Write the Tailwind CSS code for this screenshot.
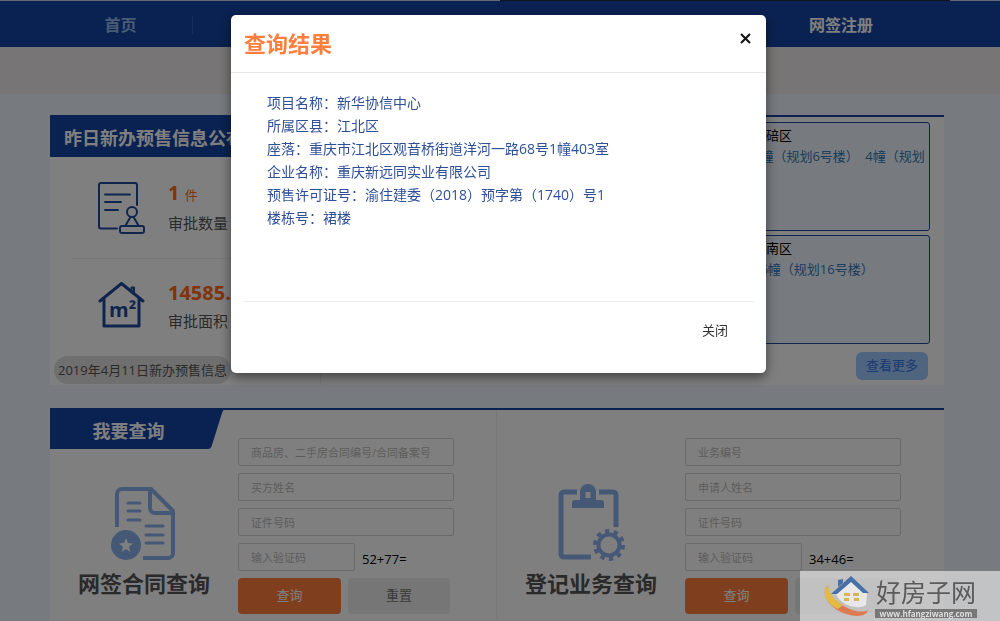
<!DOCTYPE html>
<html lang="zh-CN">
<head>
    <meta charset="UTF-8">
    <meta name="viewport" content="width=device-width, initial-scale=1.0">
    <title>查询结果</title>
    <script src="https://cdn.jsdelivr.net/npm/@tailwindcss/browser@4"></script>
</head>
<body class="h-screen overflow-hidden bg-[#eff6ff] font-['Open_Sans','Noto_Sans_CJK_SC',sans-serif] text-[13px] text-black">

  <!-- == NavBar Start == -->
  <header>
    <div class="flex h-px bg-[#c3d3e8]"><div class="ml-[50%] w-[45%] bg-[#1c2a3c]"></div></div>
    <nav class="h-[46px] bg-[#1545a4] pl-[49px] pr-[87px] pt-px">
      <ul class="grid h-full grid-cols-6 items-center text-center text-base font-bold">
        <li class="border-r border-[#2d5ab0] leading-[18px]"><a href="#" class="text-[#8fb8e8]">首页</a></li>
        <li class="col-start-6 leading-[18px]"><a href="#" class="text-white">网签注册</a></li>
      </ul>
    </nav>
    <div class="h-[47px] bg-[#eeebea]"></div>
  </header>
  <!-- == NavBar End  == -->

  <main class="space-y-[23px] pl-[50px] pr-[56px] pt-[21px]">

    <!-- Pre-sale announcements -->
    <section class="h-[270px] border-t-2 border-[#1545a4] bg-white">
      <div class="flex h-full">
        <div class="w-[271px] shrink-0 border-r border-[#f0f0f0]">
          <h2 class="h-10 whitespace-nowrap bg-[#1545a4] pl-[14px] text-lg leading-[42px] font-bold text-white">昨日新办预售信息公布</h2>
          <div class="mx-[22px] flex h-[102px] items-center border-b border-[#f0f0f0] pl-[26px]">
            <svg class="h-[52px] w-12 shrink-0" viewBox="0 0 48 52" fill="none" stroke="#1f4a9c" stroke-width="2" stroke-linecap="round" stroke-linejoin="round">
              <path d="M19 46.500H3a2 2 0 0 1-2-2V3a2 2 0 0 1 2-2h34a2 2 0 0 1 2 2v20M7 12.500h25M7 20h16M7 28h13"/>
              <circle cx="34" cy="30" r="5"/>
              <path d="M32.500 35L27.500 43.500M35.500 35L40.500 43.500"/>
              <rect x="22" y="44" width="24" height="7" rx="2"/>
            </svg>
            <div class="ml-[22px] whitespace-nowrap">
              <p class="text-xl leading-7 font-bold text-[#ff6812]">1 <span class="text-[13px] font-normal">件</span></p>
              <p class="text-[15px] leading-7 text-[#555]">审批数量</p>
            </div>
          </div>
          <div class="mx-[22px] flex h-24 items-center pl-[26px]">
            <svg class="mb-1 h-12 w-12 shrink-0" viewBox="0 0 48 48" fill="none" stroke="#1f4a9c" stroke-width="3" stroke-linecap="round" stroke-linejoin="round">
              <path d="M2 20L23.500 2.500L45 20M6 18v27h35V18"/>
              <path d="M33.500 9V6.500h2.500V12" stroke-width="2"/>
              <text x="11" y="36" font-size="20" font-weight="bold" fill="#1f4a9c" stroke="none">m²</text>
            </svg>
            <div class="ml-[22px] whitespace-nowrap">
              <p class="text-xl leading-7 font-bold text-[#ff6812]">14585.7</p>
              <p class="text-[15px] leading-7 text-[#555]">审批面积</p>
            </div>
          </div>
          <p class="ml-1 mt-px inline-block rounded-full bg-[#dedede] px-1 leading-7 text-[#555]">2019年4月11日新办预售信息</p>
        </div>

        <div class="flex flex-1 flex-col items-end pr-[14px] pt-[5px]">
          <ul class="w-[185px] space-y-1">
            <li class="h-[109px] overflow-hidden rounded-[3px] border border-[#1f4a9c] bg-[#eff6ff] px-[7px] pt-[3px] whitespace-nowrap">
              <p class="leading-[19px]">北碚区</p>
              <p class="leading-[23px] text-[#337ab7]">3幢（规划6号楼）　4幢（规划</p>
            </li>
            <li class="h-[109px] overflow-hidden rounded-[3px] border border-[#1f4a9c] bg-[#eff6ff] px-[7px] pt-[3px] whitespace-nowrap">
              <p class="leading-[19px]">巴南区</p>
              <p class="leading-[23px] text-[#337ab7]">16幢（规划16号楼）</p>
            </li>
          </ul>
          <button type="button" class="mt-2 mr-[2px] h-7 rounded-md bg-[#9ec8ff] px-[10px] text-[#3576e0]">查看更多</button>
        </div>
      </div>
    </section>

    <!-- Query forms -->
    <section class="relative h-[230px] border-t-2 border-[#1545a4] bg-white">
      <svg class="absolute -top-[2px] left-0 h-[41px] w-[175px]" viewBox="0 0 175 41" fill="#1545a4"><path d="M0 0H175Q173 2 172 5L162 37Q161 41 158 41H0z"/></svg>
      <h2 class="absolute left-0 top-0 w-[157px] text-center text-lg leading-[42px] font-bold text-white">我要查询</h2>

      <div class="grid h-full grid-cols-2">
        <form class="flex border-r border-[#f0f0f0] pt-7">
          <div class="flex w-[188px] shrink-0 flex-col items-center pt-12">
            <svg class="h-[75px] w-[68px]" viewBox="0 0 68 75" fill="none" stroke="#8ab0ea" stroke-width="4" stroke-linejoin="round">
              <path d="M7 41V8a5 5 0 0 1 5-5h29l22 22v42a5 5 0 0 1-5 5H33"/>
              <path d="M40 4v18a5 5 0 0 0 5 5h18"/>
              <path d="M18 17h12M18 25h12M18 34h12M36 40h17M36 49h17M36 57h17" stroke-width="3" stroke-linecap="round"/>
              <circle cx="16" cy="59" r="15" fill="#8ab0ea" stroke="none"/>
              <path d="M16 52l2 5 5 .4-4 3.400 1.400 5.200-4.400-3-4.400 3 1.400-5.200-4-3.400 5-.4z" fill="#fff" stroke="none"/>
            </svg>
            <h3 class="mt-[7px] text-[22px] leading-[30px] font-bold text-[#555]">网签合同查询</h3>
          </div>
          <div class="w-[216px] space-y-[7px]">
            <input type="text" aria-label="合同编号" placeholder="商品房、二手房合同编号/合同备案号" class="block h-7 w-full rounded-[2px] border border-[#d4d4d4] px-3 text-[11px] placeholder:text-[#bbb]">
            <input type="text" aria-label="买方姓名" placeholder="买方姓名" class="block h-7 w-full rounded-[2px] border border-[#d4d4d4] px-3 text-[11px] placeholder:text-[#bbb]">
            <input type="text" aria-label="证件号码" placeholder="证件号码" class="block h-7 w-full rounded-[2px] border border-[#d4d4d4] px-3 text-[11px] placeholder:text-[#bbb]">
            <div class="flex items-center gap-[7px]">
              <input type="text" aria-label="输入验证码" placeholder="输入验证码" class="h-7 w-[117px] rounded-[2px] border border-[#d4d4d4] px-3 text-[11px] placeholder:text-[#bbb]">
              <span class="pt-1 leading-6">52+77=</span>
            </div>
            <div class="flex gap-[7px]">
              <button type="submit" class="h-9 w-[103px] rounded bg-[#ff7f3f] text-white">查询</button>
              <button type="reset" class="h-9 w-[102px] rounded bg-[#ececec] text-[#777]">重置</button>
            </div>
          </div>
        </form>

        <form class="flex pt-7">
          <div class="flex w-[188px] shrink-0 flex-col items-center pt-[46px]">
            <svg class="h-[77px] w-[68px]" viewBox="0 0 68 77" fill="none" stroke="#8ab0ea" stroke-width="5">
              <path d="M20 8H7a3 3 0 0 0-3 3v59a3 3 0 0 0 3 3h27M42 8h14a3 3 0 0 1 3 3v32"/>
              <path d="M23 8a8 8 0 0 1 16 0v8h5a3 3 0 0 1 3 3v5H15v-5a3 3 0 0 1 3-3h5zM28.500 8v6h5V8z" fill="#8ab0ea" fill-rule="evenodd" stroke="none"/>
              <circle cx="52" cy="61" r="10.500" stroke-width="4"/>
              <circle cx="52" cy="61" r="14" stroke-width="4" stroke-dasharray="4.400 4.396"/>
            </svg>
            <h3 class="mt-[7px] text-[22px] leading-[30px] font-bold text-[#555]">登记业务查询</h3>
          </div>
          <div class="w-[216px] space-y-[7px]">
            <input type="text" aria-label="业务编号" placeholder="业务编号" class="block h-7 w-full rounded-[2px] border border-[#d4d4d4] px-3 text-[11px] placeholder:text-[#bbb]">
            <input type="text" aria-label="申请人姓名" placeholder="申请人姓名" class="block h-7 w-full rounded-[2px] border border-[#d4d4d4] px-3 text-[11px] placeholder:text-[#bbb]">
            <input type="text" aria-label="证件号码" placeholder="证件号码" class="block h-7 w-full rounded-[2px] border border-[#d4d4d4] px-3 text-[11px] placeholder:text-[#bbb]">
            <div class="flex items-center gap-[7px]">
              <input type="text" aria-label="输入验证码" placeholder="输入验证码" class="h-7 w-[117px] rounded-[2px] border border-[#d4d4d4] px-3 text-[11px] placeholder:text-[#bbb]">
              <span class="pt-1 leading-6">34+46=</span>
            </div>
            <div class="flex gap-[7px]">
              <button type="submit" class="h-9 w-[103px] rounded bg-[#ff7f3f] text-white">查询</button>
              <button type="reset" aria-label="重置" class="h-9 w-[102px] rounded bg-[#ececec]"></button>
            </div>
          </div>
        </form>
      </div>
    </section>
  </main>

  <!-- Result dialog -->
  <div class="fixed inset-0 flex items-start justify-center bg-black/50 pt-[15px] pr-[3px]">
    <div role="dialog" aria-labelledby="resultTitle" class="w-[535px] rounded-[5px] bg-white shadow-[0_4px_12px_rgba(0,0,0,0.5)]">
      <div class="flex h-[58px] items-start justify-between border-b border-[#e9e9e9] pl-[13px] pr-[15px]">
        <h1 id="resultTitle" class="text-[22px] leading-[57px] font-bold text-[#ff7f3f]">查询结果</h1>
        <button type="button" aria-label="关闭" class="mt-[18px]">
          <svg class="h-[11px] w-[11px]" viewBox="0 0 11 11" stroke="#111" stroke-width="2"><path d="M1 1l9 9M10 1l-9 9"/></svg>
        </button>
      </div>
      <div class="h-[228px] px-9 pt-[18px] text-sm leading-[23px] text-[#2f4f98]">
        <p>项目名称：新华协信中心</p>
        <p>所属区县：江北区</p>
        <p>座落：重庆市江北区观音桥街道洋河一路68号1幢403室</p>
        <p>企业名称：重庆新远同实业有限公司</p>
        <p>预售许可证号：渝住建委（2018）预字第（1740）号1</p>
        <p>楼栋号：裙楼</p>
      </div>
      <div class="mx-3 flex h-[72px] justify-end border-t border-[#eee] pr-[26px]">
        <button type="button" class="h-[58px] text-[13px] text-[#333]">关闭</button>
      </div>
    </div>
  </div>

  <!-- Site badge -->
  <div class="fixed bottom-0 right-0 flex h-[50px] w-[200px] bg-[#f4f4f4]/60 pl-6 pt-1">
    <svg class="h-[42px] w-[46px]" viewBox="0 0 46 42">
      <path d="M4 10C-4 18 3 32 22 39c10 3 20 3 22-4C37 39 25 35 15 28 7 22 4 16 4 10z" fill="#dd7a52"/>
      <path d="M4 10C-3 18 2 28 14 34L19 30C9 24 5 18 4 10z" fill="#e2bb45"/>
      <path d="M11 18L27 6l16 13-1 11c-8 5-20 1-27-6z" fill="#e8e8e8"/>
      <path d="M7 19L27 1l18 17h-6L27 7 13 19z" fill="#4770a6"/>
      <path d="M14 5l5-1v4l-5 4z" fill="#4770a6"/>
      <path d="M20 18h6v3h-6zM29 18h6v3h-6zM20 23h5v3h-5zM30 23h5v3h-5z" fill="#d5b45b"/>
    </svg>
    <div class="ml-[5px] w-[102px] text-center">
      <p class="text-[25px] leading-[34px] text-[#5b5b5b]">好房子网</p>
      <p class="bg-[#777] text-[8px] leading-[9px] font-bold text-[#ddd]">www.hfangziwang.com</p>
    </div>
  </div>

</body>
</html>
